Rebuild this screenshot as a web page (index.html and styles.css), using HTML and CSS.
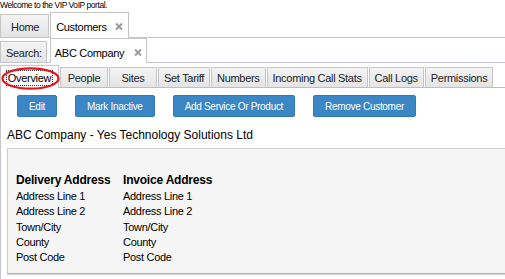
FILE: index.html
```html
<!DOCTYPE html>
<html lang="en">
<head>
  <meta charset="UTF-8">
  <title>VIP VoIP Portal - Customers</title>
  <link rel="stylesheet" href="styles.css">
</head>
<body>

<div class="welcome">Welcome to the VIP VoIP portal.</div>

<!-- main tabs -->
<div class="tabbar main">
  <div class="tab">Home</div>
  <div class="tab active">Customers
    <svg class="close" width="8" height="7" viewBox="0 0 8 7"><path d="M1 0.5 L7 6.5 M7 0.5 L1 6.5" stroke="#9a9a9a" stroke-width="2"/></svg>
  </div>
</div>

<!-- search tabs -->
<div class="tabbar search">
  <div class="tab label">Search:</div>
  <div class="tab active">ABC Company
    <svg class="close" width="8" height="7" viewBox="0 0 8 7"><path d="M1 0.5 L7 6.5 M7 0.5 L1 6.5" stroke="#9a9a9a" stroke-width="2"/></svg>
  </div>
</div>

<!-- customer tabs -->
<div class="tabbar customer">
  <div class="tab active"><span class="focus">Overview</span></div>
  <div class="tab">People</div>
  <div class="tab">Sites</div>
  <div class="tab">Set Tariff</div>
  <div class="tab">Numbers</div>
  <div class="tab">Incoming Call Stats</div>
  <div class="tab">Call Logs</div>
  <div class="tab">Permissions</div>
  <svg class="marker" width="62" height="26" viewBox="0 0 62 26"><ellipse cx="30.5" cy="12.5" rx="28" ry="10.2" fill="none" stroke="#e8141b" stroke-width="2.2"/></svg>
</div>

<div class="panel">
  <div class="actions">
    <button class="btn">Edit</button>
    <button class="btn">Mark Inactive</button>
    <button class="btn">Add Service Or Product</button>
    <button class="btn">Remove Customer</button>
  </div>

  <h2 class="company">ABC Company - Yes Technology Solutions Ltd</h2>

  <div class="box">
    <div class="address">
      <div class="head">Delivery Address</div>
      <div class="head">Invoice Address</div>
      <div>Address Line 1</div><div>Address Line 1</div>
      <div>Address Line 2</div><div>Address Line 2</div>
      <div>Town/City</div><div>Town/City</div>
      <div>County</div><div>County</div>
      <div>Post Code</div><div>Post Code</div>
    </div>
  </div>
</div>

</body>
</html>
```

FILE: styles.css
```css
body {
  margin: 0;
  padding: 0;
  font-family: "Liberation Sans", Arial, sans-serif;
  color: #000;
  background-color: #fff;
  overflow: hidden;
}

.welcome {
  height: 12px;
  line-height: 11px;
  font-size: 8.5px;
  letter-spacing: -0.45px;
  white-space: nowrap;
}

/* tab strips */
.tabbar {
  position: relative;
  display: flex;
  align-items: flex-end;
  gap: 1px;
  border-bottom: 1px solid #c2c6ce;
}

.tabbar.main {
  height: 25px;
}

.tabbar.search {
  height: 24px;
  gap: 3px;
}

.tabbar.customer {
  height: 24px;
  border-bottom-color: #b9bec9;
}

.tab {
  box-sizing: border-box;
  display: flex;
  align-items: center;
  justify-content: center;
  height: 23px;
  padding: 2px 9px 0 10px;
  font-size: 11px;
  letter-spacing: -0.3px;
  color: #222;
  background: linear-gradient(#f4f4f4, #e4e4e4);
  border: 1px solid #c6c6c6;
  border-bottom: none;
  white-space: nowrap;
}

.tab.active {
  height: 26px;
  margin-bottom: -1px;
  padding: 3px 5px 0 5px;
  background: #fff;
  color: #000;
}

.tabbar.main .tab.active {
  justify-content: flex-start;
  width: 79px;
}

.tabbar.search .tab {
  height: 21px;
  padding: 2px 4px 0 5px;
}

.tabbar.search .tab.active {
  height: 25px;
  width: 97px;
  padding: 4px 4px 0 4px;
  justify-content: flex-start;
}

.close {
  margin-left: auto;
  margin-top: -1px;
}

.tabbar.customer .tab {
  height: 20px;
  min-width: 48px;
  padding: 1px 5px 0 5px;
}

.tabbar.customer .tab.active {
  height: 23px;
  min-width: 59px;
  padding: 2px 3px 0 3px;
}

.focus {
  outline: 1px dotted #333;
  outline-offset: 0;
  padding: 0 1px;
  line-height: 14px;
}

.marker {
  position: absolute;
  left: 0;
  top: 3px;
}

/* content */
.panel {
  border-left: 1px solid #c2c6ce;
  height: 200px;
}

.actions {
  display: flex;
  gap: 18px;
  padding: 7px 0 0 16px;
}

.btn {
  height: 22px;
  padding: 0 11px;
  font-family: "Liberation Sans", Arial, sans-serif;
  font-size: 10px;
  letter-spacing: -0.3px;
  color: #fff;
  background-color: #3b86c4;
  border: 1px solid #3579b3;
  border-radius: 2px;
  cursor: pointer;
}

.company {
  margin: 11px 0 0 6px;
  font-size: 12px;
  font-weight: normal;
  line-height: 15px;
  white-space: nowrap;
}

.box {
  margin: 5px -20px 0 6px;
  height: 126px;
  box-sizing: border-box;
  padding: 24px 8px 8px 8px;
  background-color: #f5f5f5;
  border: 1px solid #cfcfcf;
  border-bottom-color: #b5b5b5;
  box-shadow: 0 1px 1px #d6d6d6;
}

.address {
  display: grid;
  grid-template-columns: 107px auto;
  font-size: 11px;
  letter-spacing: -0.3px;
  line-height: 15.3px;
}

.address .head {
  font-size: 12px;
  font-weight: bold;
  letter-spacing: -0.2px;
  line-height: 15px;
  margin-bottom: 1px;
}
```
